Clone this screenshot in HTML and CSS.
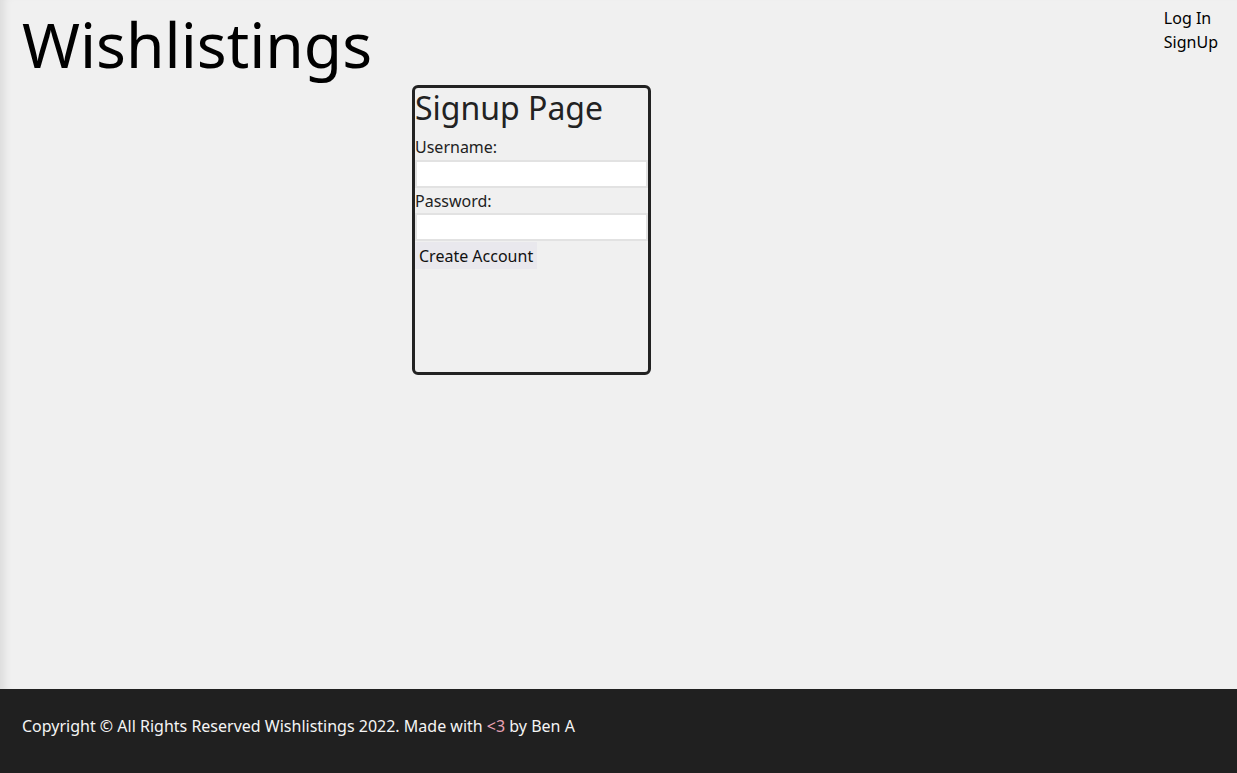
FILE: index.html
```html
<!DOCTYPE html>
<html lang="en">
<head>
<meta charset="utf-8">
<title>Wishlistings</title>
<link rel="stylesheet" href="styles.css">
</head>
<body>
<div class="page">
  <header class="header">
    <h1 class="logo">Wishlistings</h1>
    <nav class="nav">
      <a class="nav-link" href="#">Log In</a>
      <a class="nav-link" href="#">SignUp</a>
    </nav>
  </header>
  <main class="main">
    <form class="card">
      <h2 class="card-title">Signup Page</h2>
      <label class="label" for="u">Username:</label>
      <input class="input" id="u" type="text">
      <label class="label label-pw" for="p">Password:</label>
      <input class="input" id="p" type="password">
      <button class="btn" type="button">Create Account</button>
    </form>
  </main>
</div>
<footer class="footer">
  <p class="footer-text">Copyright © All Rights Reserved Wishlistings 2022. Made with <span class="heart">&lt;3</span> by Ben A</p>
</footer>
</body>
</html>
```

FILE: styles.css
```css
* { box-sizing: border-box; }
html, body { margin: 0; padding: 0; }
body {
  font-family: "Noto Sans", "DejaVu Sans", sans-serif;
  background: #f0f0f0;
  color: #222;
  height: 773px;
  display: flex;
  flex-direction: column;
}
.page {
  flex: 1;
  display: flex;
  flex-direction: column;
  box-shadow: inset 10px 0 8px -6px rgba(0,0,0,0.09);
}
.header {
  display: flex;
  justify-content: space-between;
  align-items: flex-start;
  padding: 0 19px 0 22px;
}
.logo {
  margin: 0;
  font-size: 62.4px;
  font-weight: 400;
  line-height: 88px;
  color: #000;
}
.nav {
  display: flex;
  flex-direction: column;
  padding-top: 6px;
}
.nav-link {
  color: #000;
  text-decoration: none;
  font-size: 16px;
  line-height: 24px;
}
.main {
  display: flex;
  justify-content: flex-start;
  padding-left: 412px;
  margin-top: -3px;
}
.card {
  width: 239px;
  height: 290px;
  border: 3px solid #222;
  border-radius: 6px;
  display: flex;
  flex-direction: column;
  align-items: flex-start;
}
.card-title {
  margin: 0 0 8px;
  font-size: 32px;
  font-weight: 400;
  line-height: 40px;
  color: #222;
}
.label {
  font-size: 16px;
  line-height: 22px;
  height: 24px;
  color: #222;
}
.label-pw { padding-top: 2px; height: 25px; }
.input {
  width: 233px;
  height: 28px;
  border: 2px solid #e2e2e2;
  background: #fff;
  margin: 0;
  padding: 0 4px;
  font: inherit;
}
.btn {
  margin-top: 1px;
  height: 27px;
  padding: 0 4px;
  border: none;
  background: #e9e8ed;
  font-family: inherit;
  font-size: 16px;
  color: #111;
}
.footer {
  background: #202020;
  height: 84px;
  padding: 26px 22px 0;
}
.footer-text {
  margin: 0;
  color: #f4f4f4;
  font-size: 16px;
  line-height: 22px;
}
.heart { color: #e8a2b6; }
```
